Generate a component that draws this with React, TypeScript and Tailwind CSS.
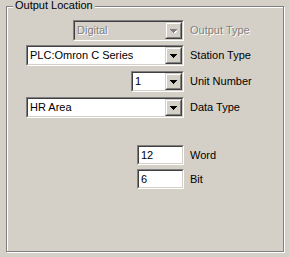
const face = "#d4d0c8";

function Sunken({ children, disabled, className }: { children: React.ReactNode; disabled?: boolean; className?: string }) {
  return (
    <div className={"border-t border-l border-t-[#808080] border-l-[#808080] border-b border-r border-b-white border-r-white " + (className || "")}>
      <div
        className={
          "h-full border-t border-l border-t-[#404040] border-l-[#404040] border-b border-r border-b-[#d4d0c8] border-r-[#d4d0c8] " +
          (disabled ? "bg-[#d4d0c8]" : "bg-white")
        }
      >
        {children}
      </div>
    </div>
  );
}

function Arrow({ disabled }: { disabled?: boolean }) {
  return (
    <div className="h-full w-[17px] border-t border-l border-t-[#d4d0c8] border-l-[#d4d0c8] border-b border-r border-b-[#404040] border-r-[#404040]">
      <div className="h-full flex items-center justify-center border-t border-l border-t-white border-l-white border-b border-r border-b-[#808080] border-r-[#808080] bg-[#d4d0c8]">
        <svg width="7" height="4" viewBox="0 0 7 4">
          {disabled && <path d="M2 2h5v1h-1v1h-1v1h-1z" fill="#fff" />}
          <path d="M0 0h7v1h-1v1h-1v1h-1v1h-1v-1h-1v-1h-1v-1h-1z" fill={disabled ? "#808080" : "#000"} />
        </svg>
      </div>
    </div>
  );
}

function Combo({ value, width, disabled }: { value: string; width: string; disabled?: boolean }) {
  return (
    <Sunken disabled={disabled} className={"h-[21px] " + width}>
      <div className="flex h-full items-stretch">
        <div className={"flex-1 flex items-center pl-[2px] " + (disabled ? "text-[#808080]" : "text-black")}>
          <span className={disabled ? "[text-shadow:1px_1px_0_#fff]" : ""}>{value}</span>
        </div>
        <Arrow disabled={disabled} />
      </div>
    </Sunken>
  );
}

function Edit({ value }: { value: string }) {
  return (
    <Sunken className="h-[20px] w-[47px]">
      <div className="h-full flex items-center pl-[2px]">{value}</div>
    </Sunken>
  );
}

function Row({ control, label, disabled, className }: { control: React.ReactNode; label: string; disabled?: boolean; className?: string }) {
  return (
    <div className={"flex items-center " + (className || "")}>
      <div className="w-[177px] flex justify-end">{control}</div>
      <span className={"ml-[6px] " + (disabled ? "text-[#808080] [text-shadow:1px_1px_0_#fff]" : "text-black")}>{label}</span>
    </div>
  );
}

export default function App() {
  return (
    <div
      className="w-[289px] h-[257px] bg-[#d4d0c8] pt-[6px] pl-[6px] text-[11px] leading-none"
      style={{ fontFamily: '"Liberation Sans", Arial, sans-serif', backgroundColor: face }}
    >
      <div className="relative w-[278px] h-[246px] border border-[#808080] shadow-[1px_1px_0_#fff,inset_1px_1px_0_#fff]">
        <span className="absolute left-[6px] top-[-7px] bg-[#d4d0c8] px-[2px] text-black">Output Location</span>
        <div className="pt-[13px]">
          <Row control={<Combo value="Digital" width="w-[111px]" disabled />} label="Output Type" disabled />
          <Row className="mt-[4px]" control={<Combo value="PLC:Omron C Series" width="w-[158px]" />} label="Station Type" />
          <Row className="mt-[5px]" control={<Combo value="1" width="w-[53px]" />} label="Unit Number" />
          <Row className="mt-[5px]" control={<Combo value="HR Area" width="w-[158px]" />} label="Data Type" />
          <Row className="mt-[27px]" control={<Edit value="12" />} label="Word" />
          <Row className="mt-[4px]" control={<Edit value="6" />} label="Bit" />
        </div>
      </div>
    </div>
  );
}
